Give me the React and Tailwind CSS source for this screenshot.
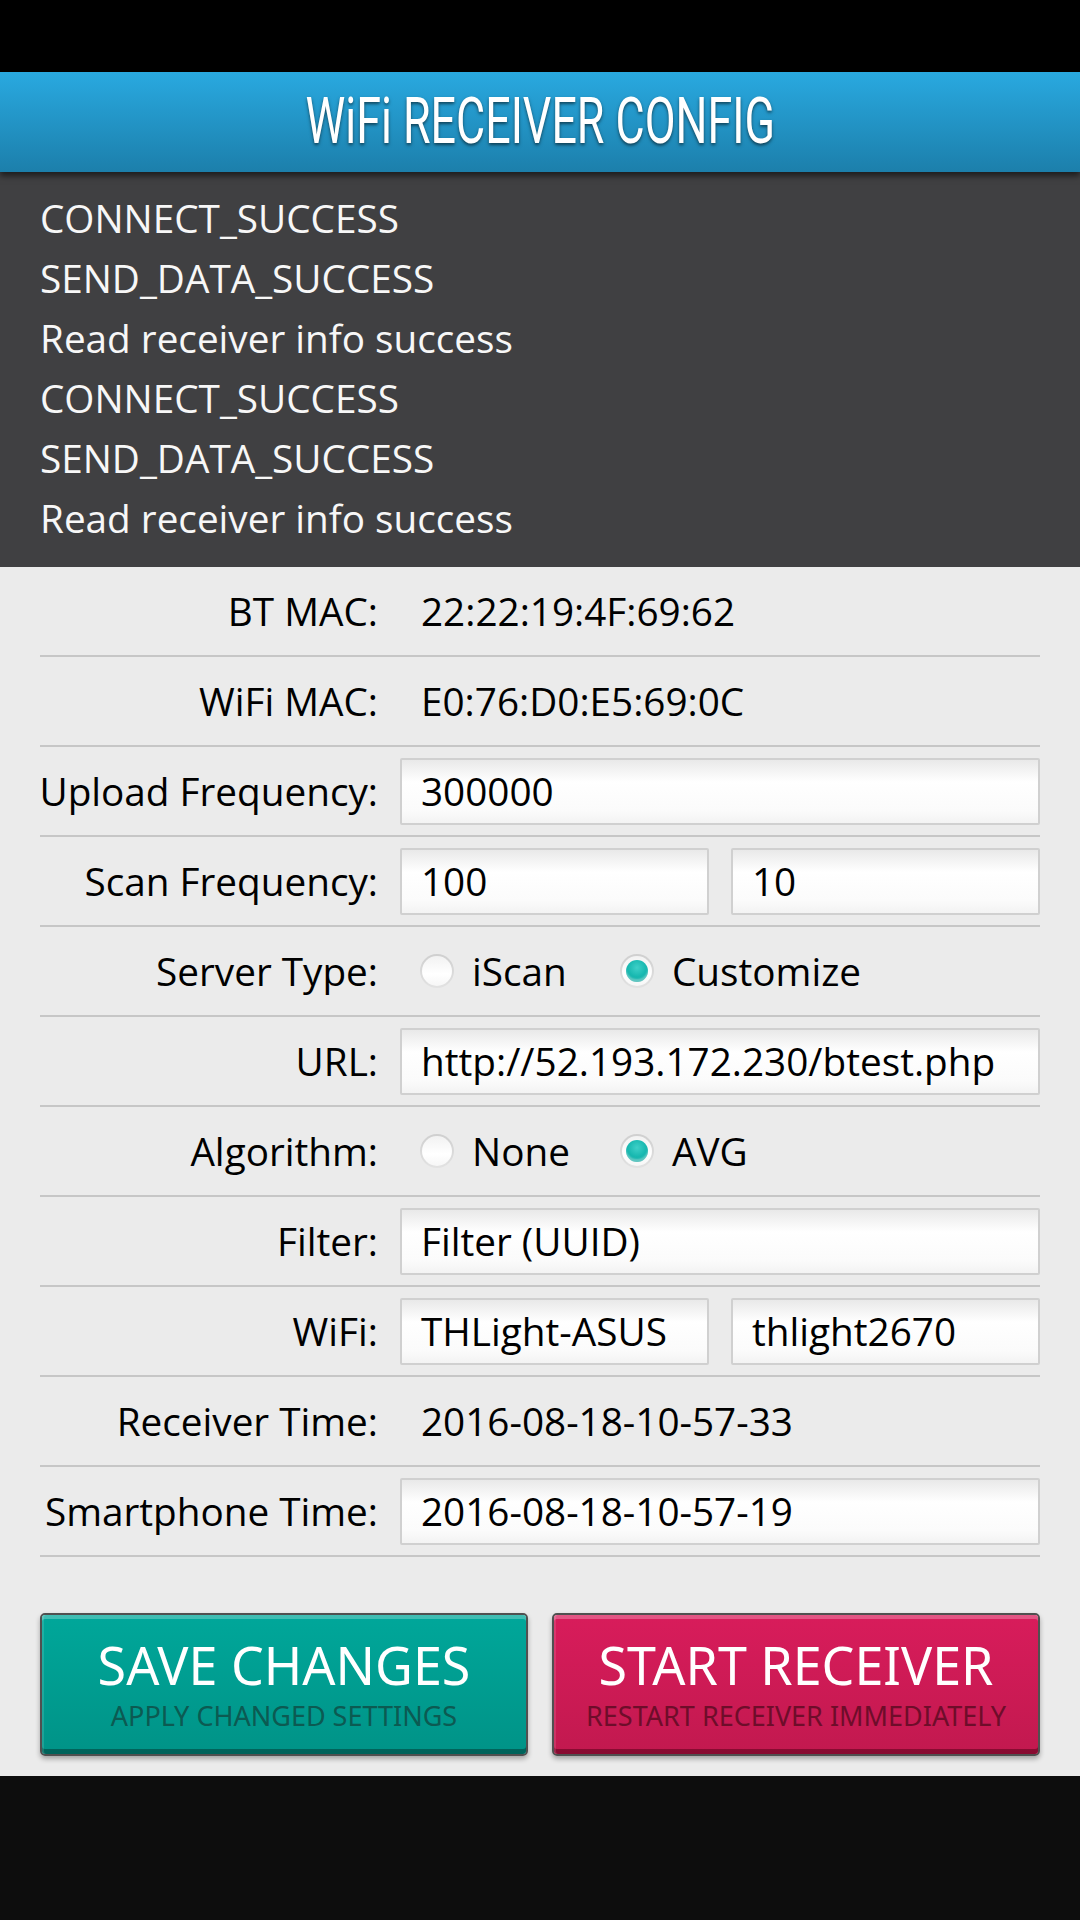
const LOG_LINES = [
  'CONNECT_SUCCESS',
  'SEND_DATA_SUCCESS',
  'Read receiver info success',
  'CONNECT_SUCCESS',
  'SEND_DATA_SUCCESS',
  'Read receiver info success',
]

function Field({ value }) {
  return (
    <div className="flex h-[67px] flex-1 items-center rounded-[2px] border-2 border-[#d0d0d0] bg-[linear-gradient(#e9e9e9,#ffffff_35%,#fbfbfb_80%,#f3f3f3)] pl-[19px] text-black">
      {value}
    </div>
  )
}

function Radio({ checked }) {
  return (
    <span className="grid h-[34px] w-[34px] shrink-0 place-items-center rounded-full bg-[linear-gradient(#cfcfcf,#e2e2e2)] p-[2px]">
      <span className="grid h-full w-full place-items-center rounded-full bg-[linear-gradient(#f2f2f2,#ffffff_60%,#f6f6f6)]">
        {checked && (
          <span className="relative h-[22px] w-[22px] rounded-full bg-[radial-gradient(circle_at_50%_35%,#3fd0c8,#10b3ab_60%,#0a958f)] shadow-[inset_0_-3px_2px_rgba(255,255,255,0.35)]" />
        )}
      </span>
    </span>
  )
}

function RadioGroup({ options, selected }) {
  return (
    <div className="flex items-center pl-[20px]">
      {options.map((opt, i) => (
        <div key={opt} className={`flex items-center gap-[18px] ${i === 0 ? 'w-[200px]' : ''}`}>
          <Radio checked={opt === selected} />
          <span>{opt}</span>
        </div>
      ))}
    </div>
  )
}

function Row({ label, children }) {
  return (
    <div className="flex h-[90px] items-center border-b-2 border-[#c6c6c6]">
      <div className="flex w-[338px] shrink-0 justify-end whitespace-nowrap">{label}</div>
      <div className="ml-[22px] flex flex-1 gap-[22px]">{children}</div>
    </div>
  )
}

function Plain({ value }) {
  return <span className="pl-[21px]">{value}</span>
}

function BigButton({ title, sub, tone }) {
  const styles =
    tone === 'teal'
      ? {
          body: 'bg-[linear-gradient(#00a79a,#009387)] shadow-[inset_0_4px_0_rgba(255,255,255,0.25),inset_2px_0_0_rgba(255,255,255,0.12),inset_0_-5px_0_rgba(0,60,55,0.55)]',
          sub: 'text-[#0c5a52]',
        }
      : {
          body: 'bg-[linear-gradient(#d81c5b,#c2194f)] shadow-[inset_0_4px_0_rgba(255,255,255,0.25),inset_2px_0_0_rgba(255,255,255,0.12),inset_0_-5px_0_rgba(90,0,25,0.55)]',
          sub: 'text-[#6e0d2a]',
        }

  return (
    <div className="flex-1 rounded-[5px] border-2 border-[#505050] shadow-[0_3px_5px_rgba(0,0,0,0.3)]">
      <div className={`flex h-[139px] flex-col items-center rounded-[3px] pt-[18px] font-['Noto_Sans',sans-serif] ${styles.body}`}>
        <span className="text-[52px] leading-[64px] text-white">{title}</span>
        <span className={`mt-[2px] text-[27px] leading-[34px] ${styles.sub}`}>{sub}</span>
      </div>
    </div>
  )
}

export default function App() {
  return (
    <div className="flex min-h-[1920px] w-[1080px] flex-col bg-[#0d0d0d] font-['Open_Sans','Noto_Sans',sans-serif]">
      <div className="h-[72px] bg-black" />

      <header className="relative z-10 flex h-[100px] items-center justify-center bg-[linear-gradient(#29a9e0,#1c7fab)] shadow-[0_4px_6px_rgba(0,0,0,0.55)]">
        <span className="inline-block scale-x-[0.7] font-['Roboto',sans-serif] text-[64px] leading-none text-white [text-shadow:0_2px_4px_rgba(0,0,0,0.55)]">
          WiFi RECEIVER CONFIG
        </span>
      </header>

      <section className="h-[395px] bg-[#404042] px-[40px] pt-[16px] text-[38.7px] leading-[60px] text-[#f7f7f7]">
        {LOG_LINES.map((line, i) => (
          <div key={i}>{line}</div>
        ))}
      </section>

      <main className="h-[1209px] bg-[#ebebeb] px-[40px] text-[38.7px] text-black">
        <Row label="BT MAC:">
          <Plain value="22:22:19:4F:69:62" />
        </Row>
        <Row label="WiFi MAC:">
          <Plain value="E0:76:D0:E5:69:0C" />
        </Row>
        <Row label="Upload Frequency:">
          <Field value="300000" />
        </Row>
        <Row label="Scan Frequency:">
          <Field value="100" />
          <Field value="10" />
        </Row>
        <Row label="Server Type:">
          <RadioGroup options={['iScan', 'Customize']} selected="Customize" />
        </Row>
        <Row label="URL:">
          <Field value="http://52.193.172.230/btest.php" />
        </Row>
        <Row label="Algorithm:">
          <RadioGroup options={['None', 'AVG']} selected="AVG" />
        </Row>
        <Row label="Filter:">
          <Field value="Filter (UUID)" />
        </Row>
        <Row label="WiFi:">
          <Field value="THLight-ASUS" />
          <Field value="thlight2670" />
        </Row>
        <Row label="Receiver Time:">
          <Plain value="2016-08-18-10-57-33" />
        </Row>
        <Row label="Smartphone Time:">
          <Field value="2016-08-18-10-57-19" />
        </Row>

        <div className="mt-[56px] flex gap-[24px]">
          <BigButton tone="teal" title="SAVE CHANGES" sub="APPLY CHANGED SETTINGS" />
          <BigButton tone="pink" title="START RECEIVER" sub="RESTART RECEIVER IMMEDIATELY" />
        </div>
      </main>

      <div className="flex-1 bg-[#0d0d0d]" />
    </div>
  )
}
